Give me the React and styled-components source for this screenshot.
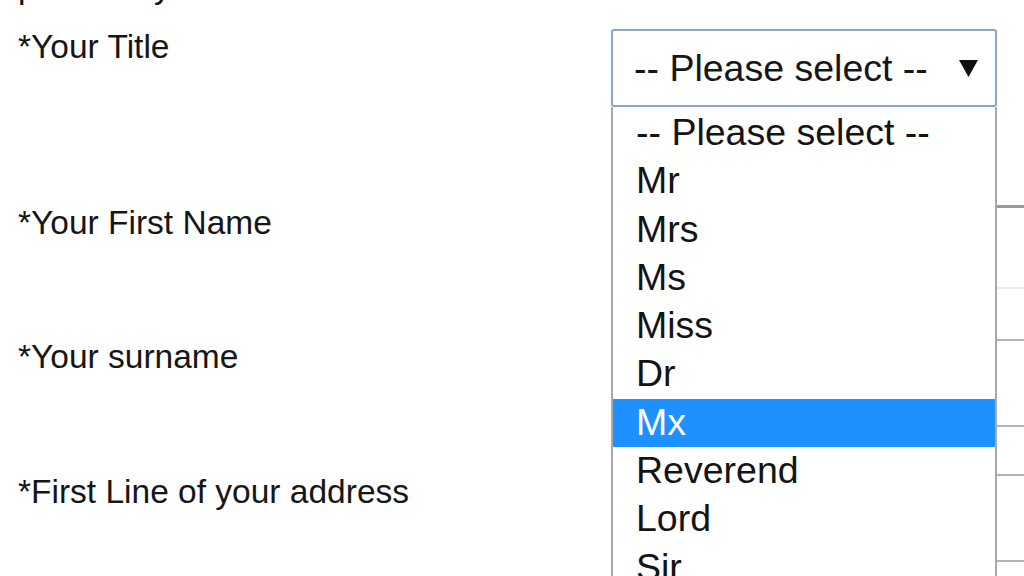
import React, { useState } from "react";
import styled, { createGlobalStyle } from "styled-components";

const GlobalStyle = createGlobalStyle`
  html, body {
    margin: 0;
    padding: 0;
    background: #ffffff;
    overflow: hidden;
  }
  body {
    font-family: "Liberation Sans", Arial, sans-serif;
  }
`;

const Page = styled.div`
  width: 1024px;
  height: 576px;
  overflow: hidden;
  padding-left: 18px;
  box-sizing: border-box;
  color: #1c1c1c;
`;

const Heading = styled.div`
  font-size: 33.5px;
  line-height: 36px;
  margin-top: -31px;
  height: 36px;
  color: #111;
`;

const Form = styled.form`
  display: flex;
  flex-direction: column;
  margin-top: 24px;
`;

const Row = styled.div`
  display: flex;
  align-items: flex-start;
  margin-bottom: ${({ $gap }) => $gap}px;
`;

const Label = styled.label`
  width: 593px;
  flex: none;
  font-size: 33.5px;
  line-height: 36px;
  color: #161616;
`;

const Field = styled.div`
  position: relative;
  flex: none;
  width: 600px;
`;

const TextInput = styled.div`
  height: ${({ $h }) => $h}px;
  box-sizing: border-box;
  border: 2px solid #b3b3b3;
  border-top: ${({ $focused }) => ($focused ? "3px solid #999" : "2px solid #b3b3b3")};
  border-bottom-color: ${({ $focused }) => ($focused ? "#e8e8e8" : "#b3b3b3")};
  background: #fff;
`;

const SelectBox = styled.div`
  width: 386px;
  height: 78px;
  box-sizing: border-box;
  border: 2px solid #8ea6c6;
  border-radius: 3px;
  display: flex;
  align-items: center;
  justify-content: space-between;
  padding: 0 17px 0 21px;
  font-size: 37.5px;
  color: #161616;
  background: #fff;
`;

const Arrow = styled.svg`
  width: 19px;
  height: 17px;
  flex: none;
`;

const OptionList = styled.ul`
  position: absolute;
  top: 78px;
  left: 0;
  width: 386px;
  box-sizing: border-box;
  margin: 0;
  padding: 2px 0 0;
  list-style: none;
  background: #fff;
  border-left: 2px solid #a8a8a8;
  border-right: 2px solid #a8a8a8;
  z-index: 2;
`;

const Option = styled.li`
  height: 48.3px;
  line-height: 46px;
  padding-left: 23px;
  font-size: 37.5px;
  color: ${({ $active }) => ($active ? "#ffffff" : "#141414")};
  background: ${({ $active }) => ($active ? "#1e90ff" : "transparent")};
  white-space: nowrap;
`;

const titles = [
  "-- Please select --",
  "Mr",
  "Mrs",
  "Ms",
  "Miss",
  "Dr",
  "Mx",
  "Reverend",
  "Lord",
  "Sir",
];

export default function App() {
  const [hovered, setHovered] = useState("Mx");

  return (
    <Page>
      <GlobalStyle />
      <Heading>personally</Heading>
      <Form>
        <Row $gap={98}>
          <Label>*Your Title</Label>
          <Field>
            <SelectBox>
              <span>-- Please select --</span>
              <Arrow viewBox="0 0 19 17">
                <polygon points="0,0 19,0 9.5,17" fill="#111" />
              </Arrow>
            </SelectBox>
            <OptionList>
              {titles.map((t) => (
                <Option
                  key={t}
                  $active={t === hovered}
                  onMouseEnter={() => setHovered(t)}
                >
                  {t}
                </Option>
              ))}
            </OptionList>
          </Field>
        </Row>
        <Row $gap={50}>
          <Label>*Your First Name</Label>
          <Field>
            <TextInput $h={84} $focused />
          </Field>
        </Row>
        <Row $gap={47}>
          <Label>*Your surname</Label>
          <Field>
            <TextInput $h={88} />
          </Field>
        </Row>
        <Row $gap={40}>
          <Label>*First Line of your address</Label>
          <Field>
            <TextInput $h={88} />
          </Field>
        </Row>
      </Form>
    </Page>
  );
}
